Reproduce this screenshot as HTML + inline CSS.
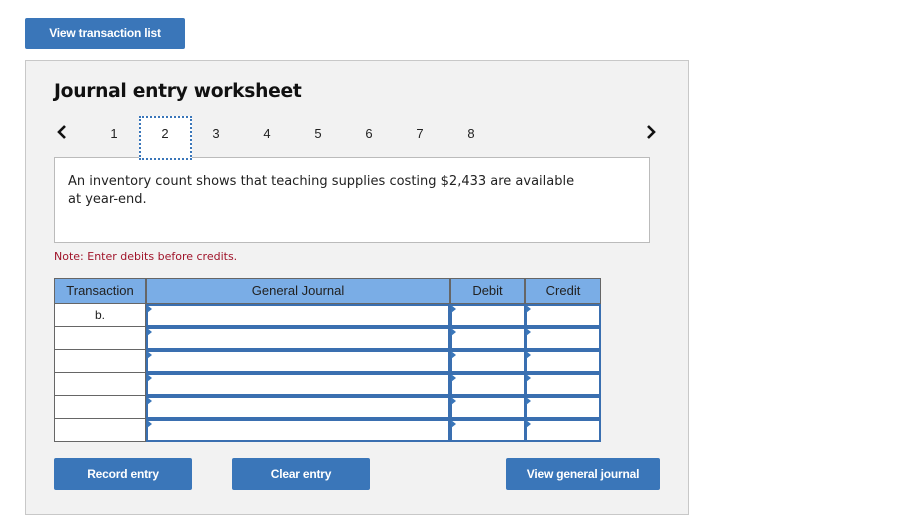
<!DOCTYPE html>
<html><head><style>
*{margin:0;padding:0;box-sizing:border-box}
body{width:912px;height:524px;background:#fff;position:relative;font-family:"Liberation Sans",Arial,sans-serif;overflow:hidden}
.a{position:absolute}
.btn{position:absolute;background:#3a76b9;color:#fff;font-weight:bold;font-size:12px;text-align:center;border-radius:2px;letter-spacing:-0.2px}
.num{position:absolute;top:126px;font-size:13px;color:#222;width:20px;text-align:center}
.cell{position:absolute;background:#fff}
.inp{position:absolute;background:#fff;border:2px solid #3a6fb0;border-top-width:2px}
.tri{position:absolute;width:0;height:0;border-top:4px solid transparent;border-bottom:4px solid transparent;border-left:5px solid #3a76b9}
</style></head><body>
<div class="btn" style="left:25px;top:18px;width:160px;height:31px;line-height:31px">View transaction list</div>
<div class="a" style="left:25px;top:60px;width:664px;height:455px;background:#f2f2f2;border:1px solid #c8c8c8"></div>
<div class="a" style="left:54px;top:81px;font-family:'DejaVu Sans',Verdana,sans-serif;font-weight:bold;font-size:18.7px;color:#111;letter-spacing:-0.3px">Journal entry worksheet</div>
<svg class="a" style="left:55px;top:123px" width="14" height="18"><path d="M10 3 L4 9 L10 15" stroke="#111" stroke-width="2.6" fill="none"/></svg>
<svg class="a" style="left:644px;top:123px" width="14" height="18"><path d="M4 3 L10 9 L4 15" stroke="#111" stroke-width="2.6" fill="none"/></svg>
<div class="a" style="left:54px;top:157px;width:596px;height:86px;background:#fff;border:1px solid #bbb"></div>
<div class="a" style="left:139px;top:116px;width:53px;height:44px;background:#fff;border:2px dotted #3a76b9"></div>
<div class="num" style="left:104px">1</div>
<div class="num" style="left:155px">2</div>
<div class="num" style="left:206px">3</div>
<div class="num" style="left:257px">4</div>
<div class="num" style="left:308px">5</div>
<div class="num" style="left:359px">6</div>
<div class="num" style="left:410px">7</div>
<div class="num" style="left:461px">8</div>
<div class="a" style="left:68px;top:173px;font-family:'DejaVu Sans',Verdana,sans-serif;font-size:13px;line-height:18px;color:#222;white-space:nowrap">An inventory count shows that teaching supplies costing $2,433 are available<br>at year-end.</div>
<div class="a" style="left:54px;top:250px;font-family:'DejaVu Sans',Verdana,sans-serif;font-size:11px;color:#a0142a">Note: Enter debits before credits.</div>
<!-- table -->
<div class="a" style="left:54px;top:278px;width:547px;height:164px;background:#666"></div>
<div class="a" style="left:55px;top:279px;width:90px;height:24px;background:#7aade6;font-size:13px;line-height:24px;text-align:center;color:#222">Transaction</div>
<div class="a" style="left:147px;top:279px;width:302px;height:24px;background:#7aade6;font-size:13px;line-height:24px;text-align:center;color:#222">General Journal</div>
<div class="a" style="left:451px;top:279px;width:73px;height:24px;background:#7aade6;font-size:13px;line-height:24px;text-align:center;color:#222">Debit</div>
<div class="a" style="left:526px;top:279px;width:74px;height:24px;background:#7aade6;font-size:13px;line-height:24px;text-align:center;color:#222">Credit</div>
<div id="rows"></div>
<script>
var h='';var tops=[304,327,350,373,396,419];
tops.forEach(function(t,i){
h+='<div class="cell" style="left:55px;top:'+t+'px;width:90px;height:22px;font-size:12px;line-height:22px;text-align:center;color:#222">'+(i==0?'b.':'')+'</div>';
h+='<div class="inp" style="left:146px;top:'+t+'px;width:304px;height:23px"></div><div class="tri" style="left:147px;top:'+(t+1)+'px"></div>';
h+='<div class="inp" style="left:450px;top:'+t+'px;width:76px;height:23px"></div><div class="tri" style="left:451px;top:'+(t+1)+'px"></div>';
h+='<div class="inp" style="left:525px;top:'+t+'px;width:76px;height:23px"></div><div class="tri" style="left:526px;top:'+(t+1)+'px"></div>';
});
document.getElementById('rows').innerHTML=h;
</script>
<div class="btn" style="left:54px;top:458px;width:138px;height:32px;line-height:32px">Record entry</div>
<div class="btn" style="left:232px;top:458px;width:138px;height:32px;line-height:32px">Clear entry</div>
<div class="btn" style="left:506px;top:458px;width:154px;height:32px;line-height:32px">View general journal</div>
</body></html>
